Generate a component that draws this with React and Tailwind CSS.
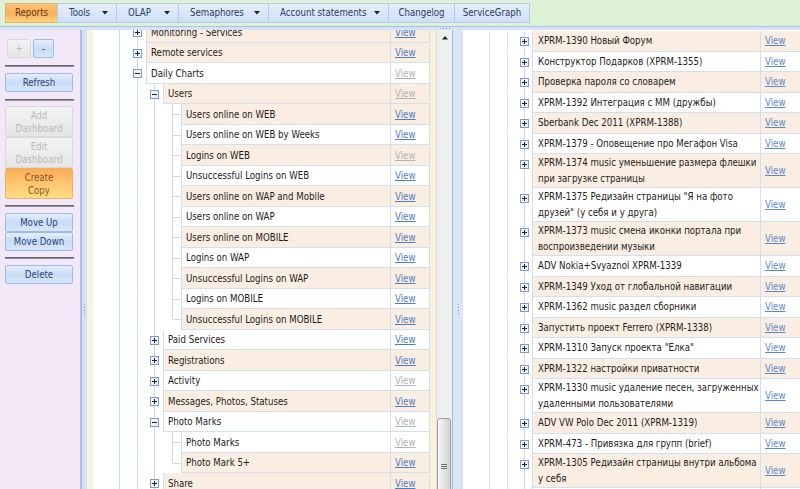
import React from 'react'

const menu = [
  { name: 'Reports', w: 53, active: true },
  { name: 'Tools', w: 60, drop: true },
  { name: 'OLAP', w: 63, drop: true },
  { name: 'Semaphores', w: 91, drop: true },
  { name: 'Account statements', w: 121, drop: true },
  { name: 'Changelog', w: 67 },
  { name: 'ServiceGraph', w: 76 },
]

// l = level, i = expander, c = cream row, v = view enabled, last = last child
const tree = [
  { t: 'Monitoring - Services', l: 1, i: '+', c: 1, v: 1 },
  { t: 'Remote services', l: 1, i: '+', c: 1, v: 1 },
  { t: 'Daily Charts', l: 1, i: '-', c: 0, v: 0 },
  { t: 'Users', l: 2, i: '-', c: 1, v: 0 },
  { t: 'Users online on WEB', l: 3, c: 1, v: 1 },
  { t: 'Users online on WEB by Weeks', l: 3, c: 0, v: 1 },
  { t: 'Logins on WEB', l: 3, c: 1, v: 0 },
  { t: 'Unsuccessful Logins on WEB', l: 3, c: 0, v: 1 },
  { t: 'Users online on WAP and Mobile', l: 3, c: 1, v: 1 },
  { t: 'Users online on WAP', l: 3, c: 0, v: 1 },
  { t: 'Users online on MOBILE', l: 3, c: 1, v: 1 },
  { t: 'Logins on WAP', l: 3, c: 0, v: 1 },
  { t: 'Unsuccessful Logins on WAP', l: 3, c: 1, v: 1 },
  { t: 'Logins on MOBILE', l: 3, c: 0, v: 1 },
  { t: 'Unsuccessful Logins on MOBILE', l: 3, c: 1, v: 1, last: 1 },
  { t: 'Paid Services', l: 2, i: '+', c: 0, v: 1 },
  { t: 'Registrations', l: 2, i: '+', c: 1, v: 1 },
  { t: 'Activity', l: 2, i: '+', c: 0, v: 0 },
  { t: 'Messages, Photos, Statuses', l: 2, i: '+', c: 1, v: 1 },
  { t: 'Photo Marks', l: 2, i: '-', c: 0, v: 0 },
  { t: 'Photo Marks', l: 3, c: 0, v: 0 },
  { t: 'Photo Mark 5+', l: 3, c: 1, v: 1, last: 1 },
  { t: 'Share', l: 2, i: '+', c: 1, v: 1 },
]

const tasks = [
  { lines: ['XPRM-1390 Новый Форум'], c: 1 },
  { lines: ['Конструктор Подарков (XPRM-1355)'], c: 0 },
  { lines: ['Проверка пароля со словарем'], c: 1 },
  { lines: ['XPRM-1392 Интеграция с ММ (дружбы)'], c: 0 },
  { lines: ['Sberbank Dec 2011 (XPRM-1388)'], c: 1 },
  { lines: ['XPRM-1379 - Оповещение про Мегафон Visa'], c: 0 },
  { lines: ['XPRM-1374 music уменьшение размера флешки', 'при загрузке страницы'], c: 1 },
  { lines: ['XPRM-1375 Редизайн страницы "Я на фото', 'друзей" (у себя и у друга)'], c: 0 },
  { lines: ['XPRM-1373 music смена иконки портала при', 'воспроизведении музыки'], c: 1 },
  { lines: ['ADV Nokia+Svyaznoi XPRM-1339'], c: 0 },
  { lines: ['XPRM-1349 Уход от глобальной навигации'], c: 1 },
  { lines: ['XPRM-1362 music раздел сборники'], c: 0 },
  { lines: ['Запустить проект Ferrero (XPRM-1338)'], c: 1 },
  { lines: ['XPRM-1310 Запуск проекта "Елка"'], c: 0 },
  { lines: ['XPRM-1322 настройки приватности'], c: 1 },
  { lines: ['XPRM-1330 music удаление песен, загруженных', 'удаленными пользователями'], c: 0 },
  { lines: ['ADV VW Polo Dec 2011 (XPRM-1319)'], c: 1 },
  { lines: ['XPRM-473 - Привязка для групп (brief)'], c: 0 },
  { lines: ['XPRM-1305 Редизайн страницы внутри альбома', 'у себя'], c: 1 },
  { lines: ['XPRM-1290 Новые статусы'], c: 0 },
]

const Expander = ({ x, y, minus }) => (
  <g>
    <rect x={x + 0.5} y={y + 0.5} width="8" height="8" fill="#eef3fb" stroke="#7f9cc7" />
    <rect x={x + 2} y={y + 4} width="5" height="1" fill="#1e2430" />
    {!minus && <rect x={x + 4} y={y + 2} width="1" height="5" fill="#1e2430" />}
  </g>
)

const Btn = ({ kind = 'blue', className = '', children }) => {
  const look = {
    blue: 'border-[#9dbbe5] bg-linear-to-b from-[#e4eefc] via-[#c9dcf7] to-[#d7e6fa] text-[#2f4576]',
    off: 'border-[#d8d8d8] bg-linear-to-b from-[#f3f3f3] to-[#e5e5e5] text-[#b9b9b9]',
    orange: 'border-[#e5b36e] bg-linear-to-b from-[#ffab58] via-[#ffc66f] to-[#ffdc84] text-[#8b5526]',
  }[kind]
  return (
    <div className={`flex items-center justify-center text-center leading-[13px] border rounded-[2px] ${look} ${className}`}>
      {children}
    </div>
  )
}

const Sep = ({ className = '' }) => (
  <div className={`h-[2px] w-[69px] border-t border-[#666666] bg-[#9a919f] ${className}`} />
)

const TreeRow = ({ row }) => {
  const ind = row.l === 1 ? 53 : row.l === 2 ? 70 : 88
  return (
    <div className="flex h-[20.5px] shrink-0">
      <div className="relative shrink-0 h-full" style={{ width: ind }}>
        <svg className="absolute inset-0" width={ind} height="100%">
          <line x1="26.5" y1="0" x2="26.5" y2="100%" stroke="#cddaeb" />
          <line x1="44.5" y1="0" x2="44.5" y2="100%" stroke="#cddaeb" />
          {row.l >= 2 && <line x1="61.5" y1="0" x2="61.5" y2="100%" stroke="#cddaeb" />}
          {row.l === 3 && (
            <>
              <line x1="79.5" y1="0" x2="79.5" y2={row.last ? 10.5 : '100%'} stroke="#cddaeb" />
              <line x1="79.5" y1="10.5" x2="88" y2="10.5" stroke="#cddaeb" />
            </>
          )}
          {row.l === 1 && <Expander x={40} y={6} minus={row.i === '-'} />}
          {row.l === 2 && <Expander x={57} y={6} minus={row.i === '-'} />}
        </svg>
      </div>
      <div className={`flex flex-1 min-w-0 border-x border-b border-[#d2dff0] ${row.c ? 'bg-[#faede1]' : 'bg-white'}`}>
        <div className="flex-1 min-w-0 flex items-center pl-[4px] pt-[2px] whitespace-nowrap overflow-hidden text-[#1c1c1c]">{row.t}</div>
        <div className="w-[39px] shrink-0 flex items-center pl-[4px] pt-[2px] border-l border-[#d2dff0]">
          <span className={`underline ${row.v ? 'text-[#4d7cc8]' : 'text-[#b2b2b2]'}`}>View</span>
        </div>
      </div>
    </div>
  )
}

const TaskRow = ({ row }) => (
  <div className="flex shrink-0">
    <div className="relative w-[69px] shrink-0">
      <svg className="absolute inset-0" width="69" height="100%">
        <line x1="26.5" y1="0" x2="26.5" y2="100%" stroke="#e1e6ed" />
        <line x1="44.5" y1="0" x2="44.5" y2="100%" stroke="#e1e6ed" />
        <line x1="61.5" y1="0" x2="61.5" y2="100%" stroke="#cddaeb" />
        <Expander x={57} y={6} />
      </svg>
    </div>
    <div className={`flex flex-1 min-w-0 border-l border-b border-[#d2dff0] ${row.c ? 'bg-[#faede1]' : 'bg-white'}`}>
      <div className="flex-1 min-w-0 overflow-hidden flex flex-col justify-center min-h-[19.5px] pl-[5px] pt-[1px] leading-[16px] whitespace-nowrap text-[#1c1c1c]">
        {row.lines.map((l, k) => (
          <div key={k}>{l}</div>
        ))}
      </div>
      <div className="w-[40px] shrink-0 flex items-center pl-[4px] pt-[1px] border-l border-[#d2dff0]">
        <span className="underline text-[#5b87cf]">View</span>
      </div>
    </div>
  </div>
)

const Grip = ({ className = '' }) => (
  <div className={`flex flex-col gap-[2px] ${className}`}>
    {[0, 1, 2, 3].map((k) => (
      <div key={k} className="w-[1px] h-[1px] bg-[#7e93b3]" />
    ))}
  </div>
)

export default function App() {
  return (
    <div className="w-[800px] h-[489px] overflow-hidden bg-white flex flex-col text-[9.6px] [font-family:'DejaVu_Sans_Condensed','Liberation_Sans',sans-serif]">
      {/* menu bar */}
      <div className="h-[26px] shrink-0 bg-[#ddf1d7] flex items-start pl-[5px] pt-[3px]">
        {menu.map((m) => (
          <div
            key={m.name}
            style={{ width: m.w }}
            className={`h-[20px] -ml-px first:ml-0 flex items-center border ${
              m.drop ? 'justify-between pl-[11px] pr-[8px]' : 'justify-center'
            } ${
              m.active
                ? 'border-[#e6b26b] bg-linear-to-b from-[#ffc57c] via-[#fcae55] to-[#ffd383] text-[#5e3c17]'
                : 'border-[#b6cbe9] bg-linear-to-b from-[#e6eefb] to-[#cddff7] text-[#2c3d5e]'
            }`}
          >
            <span className="whitespace-nowrap">{m.name}</span>
            {m.drop && (
              <svg width="6" height="4" viewBox="0 0 6 4">
                <path d="M0 0h6L3 3.5z" fill="#222" />
              </svg>
            )}
          </div>
        ))}
      </div>

      {/* horizontal splitter */}
      <div className="h-[4px] shrink-0 bg-[#d4e3f6] border-t border-[#a9c3e6] flex items-center pl-[440px] gap-[2px]">
        {[0, 1, 2, 3].map((k) => (
          <div key={k} className="w-[1px] h-[1px] bg-[#7e93b3]" />
        ))}
      </div>

      <div className="flex flex-1 min-h-0">
        {/* left toolbar */}
        <div className="w-[81px] shrink-0 bg-[#f3e8f8] border-r border-[#c7bcd3] flex flex-col pl-[5px] pt-[9px]">
          <div className="flex gap-[2px] pl-[2px]">
            <Btn kind="off" className="w-[24px] h-[19px]">+</Btn>
            <Btn className="w-[21px] h-[19px]">-</Btn>
          </div>
          <Sep className="mt-[7px]" />
          <Btn className="mt-[6px] w-[68px] h-[19px]">Refresh</Btn>
          <Sep className="mt-[7px]" />
          <Btn kind="off" className="mt-[5px] w-[68px] h-[31px]">Add<br />Dashboard</Btn>
          <Btn kind="off" className="w-[68px] h-[31px]">Edit<br />Dashboard</Btn>
          <Btn kind="orange" className="w-[68px] h-[31px]">Create<br />Copy</Btn>
          <Sep className="mt-[6px]" />
          <Btn className="mt-[6px] w-[68px] h-[19px]">Move Up</Btn>
          <Btn className="w-[68px] h-[19px]">Move Down</Btn>
          <Sep className="mt-[6px]" />
          <Btn className="mt-[6px] w-[68px] h-[19px]">Delete</Btn>
        </div>

        {/* splitter */}
        <div className="w-[6px] shrink-0 bg-[#d3e2f5] border-l border-[#a3bee4] flex justify-center pt-[274px]">
          <Grip />
        </div>

        {/* middle: report tree */}
        <div className="w-[6px] shrink-0 bg-[#f7f1dd]" />
        <div className="w-[337px] shrink-0 overflow-hidden flex flex-col">
          <div className="mt-[-8px] flex flex-col">
            {tree.map((r, k) => (
              <TreeRow key={k} row={r} />
            ))}
          </div>
        </div>
        <div className="w-[6px] shrink-0 bg-[#f7f1dd]" />
        <div className="w-[16px] shrink-0 bg-[#efefef] border-l border-[#e0e0e0] flex flex-col overflow-hidden">
          <div className="h-[16px] shrink-0 flex items-center justify-center">
            <svg width="6" height="4" viewBox="0 0 6 4">
              <path d="M0 3.5h6L3 0z" fill="#222" />
            </svg>
          </div>
          <div className="mt-[372px] h-[80px] shrink-0 mr-[1px] rounded-t-[3px] border border-[#9d9d9d] bg-linear-to-r from-[#f7f7f7] to-[#d2d2d2] flex flex-col items-center pt-[45px] gap-[1px]">
            <div className="w-[6px] h-[1px] bg-[#6f6f6f]" />
            <div className="w-[6px] h-[1px] bg-[#6f6f6f]" />
            <div className="w-[6px] h-[1px] bg-[#6f6f6f]" />
          </div>
        </div>

        {/* splitter */}
        <div className="w-[11px] shrink-0 bg-[#d9e6f6] border-l border-[#9fb9de] flex justify-center pt-[274px]">
          <Grip />
        </div>

        {/* right: tasks tree */}
        <div className="flex-1 min-w-0 overflow-hidden flex flex-col pt-[1px]">
          {tasks.map((r, k) => (
            <TaskRow key={k} row={r} />
          ))}
        </div>
      </div>
    </div>
  )
}
